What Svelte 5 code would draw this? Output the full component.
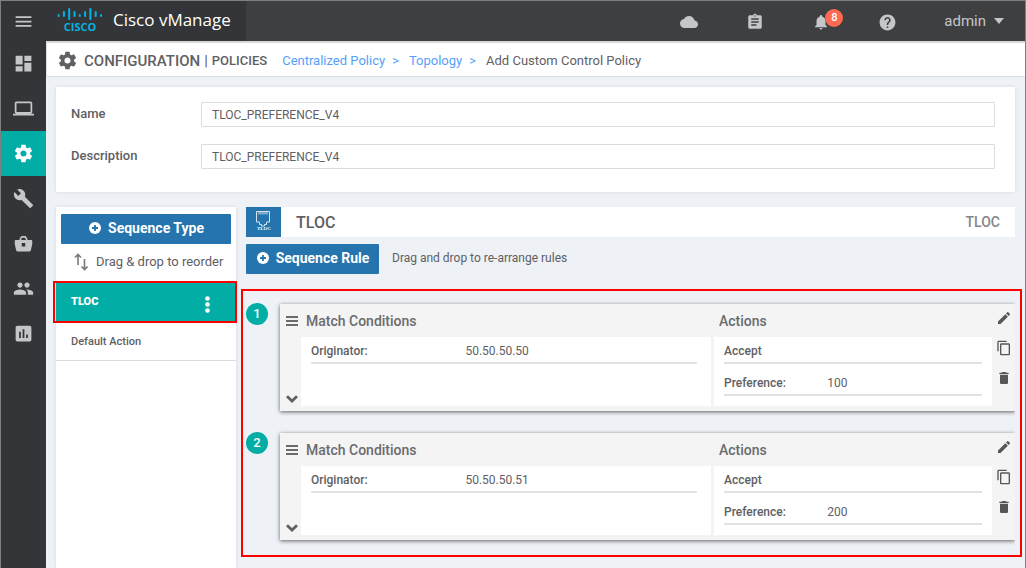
<script lang="ts">
  type Rule = { originator: string; preference: string }

  const icons = {
    menu: 'M3 18h18v-2H3v2zm0-5h18v-2H3v2zm0-7v2h18V6H3z',
    dashboard: 'M3 13h8V3H3v10zm0 8h8v-6H3v6zm10 0h8V11h-8v10zm0-18v6h8V3h-8z',
    laptop:
      'M20 18c1.1 0 1.99-.9 1.99-2L22 6c0-1.1-.9-2-2-2H4c-1.1 0-2 .9-2 2v10c0 1.1.9 2 2 2H0v2h24v-2h-4zM4 6h16v10H4V6z',
    settings:
      'M19.43 12.98c.04-.32.07-.64.07-.98s-.03-.66-.07-.98l2.11-1.65c.19-.15.24-.42.12-.64l-2-3.46c-.12-.22-.39-.3-.61-.22l-2.49 1c-.52-.4-1.08-.73-1.69-.98l-.38-2.65C14.46 2.18 14.25 2 14 2h-4c-.25 0-.46.18-.49.42l-.38 2.65c-.61.25-1.17.59-1.69.98l-2.49-1c-.23-.09-.49 0-.61.22l-2 3.46c-.13.22-.07.49.12.64l2.11 1.65c-.04.32-.07.65-.07.98s.03.66.07.98l-2.11 1.65c-.19.15-.24.42-.12.64l2 3.46c.12.22.39.3.61.22l2.49-1c.52.4 1.08.73 1.69.98l.38 2.65c.03.24.24.42.49.42h4c.25 0 .46-.18.49-.42l.38-2.65c.61-.25 1.17-.59 1.69-.98l2.49 1c.23.09.49 0 .61-.22l2-3.46c.12-.22.07-.49-.12-.64l-2.11-1.65zM12 15.5c-1.93 0-3.5-1.57-3.5-3.5s1.57-3.5 3.5-3.5 3.5 1.57 3.5 3.5-1.57 3.5-3.5 3.5z',
    build:
      'M22.7 19l-9.1-9.1c.9-2.3.4-5-1.5-6.9-2-2-5-2.4-7.4-1.3L9 6 6 9 1.6 4.7C.4 7.1.9 10.1 2.9 12.1c1.9 1.9 4.6 2.4 6.9 1.5l9.1 9.1c.4.4 1 .4 1.4 0l2.3-2.3c.5-.4.5-1.1.1-1.4z',
    bag: 'M7.500 8V6.500L9.500 3.500h5l2 3V8H20.500c1 0 1.500.6 1.500 1.500v3l-1.500 7c-.2 1-.8 1.500-1.700 1.500H5.200c-.9 0-1.500-.5-1.700-1.500L2 12.500v-3C2 8.600 2.500 8 3.500 8h4zm2 0h5V6.500l-1-1h-3l-1 1V8zM10 11.500v4h4v-4h-4z',
    people:
      'M16 11c1.66 0 2.99-1.34 2.99-3S17.66 5 16 5c-1.66 0-3 1.34-3 3s1.34 3 3 3zm-8 0c1.66 0 2.99-1.34 2.99-3S9.66 5 8 5C6.34 5 5 6.34 5 8s1.34 3 3 3zm0 2c-2.33 0-7 1.17-7 3.5V19h14v-2.5c0-2.33-4.67-3.5-7-3.5zm8 0c-.29 0-.62.02-.97.05 1.16.84 1.97 1.97 1.97 3.45V19h6v-2.5c0-2.33-4.67-3.5-7-3.5z',
    chart:
      'M19 3H5c-1.1 0-2 .9-2 2v14c0 1.1.9 2 2 2h14c1.1 0 2-.9 2-2V5c0-1.1-.9-2-2-2zM9 17H7v-7h2v7zm4 0h-2V7h2v10zm4 0h-2v-4h2v4z',
    cloud:
      'M19.35 10.04C18.67 6.59 15.64 4 12 4 9.11 4 6.6 5.64 5.35 8.04 2.34 8.36 0 10.91 0 14c0 3.31 2.69 6 6 6h13c2.76 0 5-2.24 5-5 0-2.64-2.05-4.78-4.65-4.96z',
    tasks:
      'M19 3h-4.18C14.4 1.84 13.3 1 12 1c-1.3 0-2.4.84-2.82 2H5c-1.1 0-2 .9-2 2v14c0 1.1.9 2 2 2h14c1.1 0 2-.9 2-2V5c0-1.1-.9-2-2-2zm-7 0c.55 0 1 .45 1 1s-.45 1-1 1-1-.45-1-1 .45-1 1-1zm2 14H7v-2h7v2zm3-4H7v-2h10v2zm0-4H7V7h10v2z',
    bell: 'M12 22c1.1 0 2-.9 2-2h-4c0 1.1.89 2 2 2zm6-6v-5c0-3.07-1.64-5.64-4.5-6.32V4c0-.83-.67-1.5-1.5-1.5s-1.5.67-1.5 1.5v.68C7.63 5.36 6 7.92 6 11v5l-2 2v1h16v-1l-2-2z',
    help: 'M12 2C6.48 2 2 6.48 2 12s4.48 10 10 10 10-4.48 10-10S17.52 2 12 2zm1 17h-2v-2h2v2zm2.07-7.75l-.9.92C13.45 12.9 13 13.5 13 15h-2v-.5c0-1.1.45-2.1 1.17-2.83l1.24-1.26c.37-.36.59-.86.59-1.41 0-1.1-.9-2-2-2s-2 .9-2 2H8c0-2.21 1.79-4 4-4s4 1.79 4 4c0 .88-.36 1.68-.93 2.25z',
    edit: 'M3 17.25V21h3.75L17.81 9.94l-3.75-3.75L3 17.25zM20.71 7.04c.39-.39.39-1.02 0-1.41l-2.34-2.34c-.39-.39-1.02-.39-1.41 0l-1.83 1.83 3.75 3.75 1.83-1.83z',
    copy: 'M16 1H4c-1.1 0-2 .9-2 2v14h2V3h12V1zm3 4H8c-1.1 0-2 .9-2 2v14c0 1.1.9 2 2 2h11c1.1 0 2-.9 2-2V7c0-1.1-.9-2-2-2zm0 16H8V7h11v14z',
    trash: 'M6 19c0 1.1.9 2 2 2h8c1.1 0 2-.9 2-2V7H6v12zM19 4h-3.5l-1-1h-5l-1 1H5v2h14V4z',
  }
  type IconName = keyof typeof icons

  const nav: { icon: IconName; label: string }[] = [
    { icon: 'dashboard', label: 'Dashboard' },
    { icon: 'laptop', label: 'Monitor' },
    { icon: 'settings', label: 'Configuration' },
    { icon: 'build', label: 'Tools' },
    { icon: 'bag', label: 'Maintenance' },
    { icon: 'people', label: 'Administration' },
    { icon: 'chart', label: 'Analytics' },
  ]

  let section = 'Configuration'
  let name = 'TLOC_PREFERENCE_V4'
  let description = 'TLOC_PREFERENCE_V4'
  let collapsed: boolean[] = [false, false]
  let rules: Rule[] = [
    { originator: '50.50.50.50', preference: '100' },
    { originator: '50.50.50.51', preference: '200' },
  ]

  // top and height of each bar in the logo
  const bars = [
    [6, 3],
    [3, 6],
    [0, 12],
    [3, 6],
    [6, 3],
    [3, 6],
    [0, 12],
    [3, 6],
    [6, 3],
  ]

  function addRule() {
    rules = [...rules, { originator: '', preference: '' }]
  }

  function copyRule(i: number) {
    rules = [...rules.slice(0, i + 1), { ...rules[i] }, ...rules.slice(i + 1)]
  }

  function removeRule(i: number) {
    rules = rules.filter((_, n) => n !== i)
  }
</script>

<div class="shell">
  <header>
    <div class="brand">
      <button class="burger" aria-label="Menu">
        <svg width="21" height="21" viewBox="0 0 24 24"><path d={icons.menu} /></svg>
      </button>
      <svg class="logo" width="46" height="30" viewBox="0 0 46 30">
        {#each bars as [top, height], i}
          <rect x={0.6 + i * 5.3} y={top + 2} width="2" {height} rx="1" />
        {/each}
        <text x="23" y="25" text-anchor="middle">CISCO</text>
      </svg>
      <span class="product">Cisco vManage</span>
    </div>
    <div class="tools">
      <button aria-label="Cloud">
        <svg width="18" height="18" viewBox="0 0 24 24"><path d={icons.cloud} /></svg>
      </button>
      <button aria-label="Tasks">
        <svg width="18" height="18" viewBox="0 0 24 24"><path d={icons.tasks} /></svg>
      </button>
      <button aria-label="Alarms">
        <svg width="18" height="18" viewBox="0 0 24 24"><path d={icons.bell} /></svg>
        <span class="count">8</span>
      </button>
      <button aria-label="Help">
        <svg width="19" height="19" viewBox="0 0 24 24"><path d={icons.help} /></svg>
      </button>
    </div>
    <button class="user">
      admin
      <svg width="10" height="6" viewBox="0 0 10 6"><path d="M0 0h10L5 6z" /></svg>
    </button>
  </header>

  <div class="body">
    <nav>
      {#each nav as item}
        <button
          class:active={section === item.label}
          aria-label={item.label}
          on:click={() => (section = item.label)}
        >
          <svg width="21" height="21" viewBox="0 0 24 24"><path d={icons[item.icon]} fill-rule="evenodd" /></svg>
        </button>
      {/each}
    </nav>

    <main>
      <div class="crumbs">
        <svg width="21" height="21" viewBox="0 0 24 24"><path d={icons.settings} /></svg>
        <h1>CONFIGURATION</h1>
        <span class="bar">|</span>
        <span class="sub">POLICIES</span>
        <a href="#centralized">Centralized Policy</a>
        <span class="sep">&gt;</span>
        <a href="#topology">Topology</a>
        <span class="sep">&gt;</span>
        <span class="here">Add Custom Control Policy</span>
      </div>

      <form class="panel">
        <label for="name">Name</label>
        <input id="name" type="text" bind:value={name} />
        <label for="description">Description</label>
        <input id="description" type="text" bind:value={description} />
      </form>

      <div class="columns">
        <aside class="panel">
          <button class="primary">
            <svg width="12" height="12" viewBox="0 0 12 12">
              <circle cx="6" cy="6" r="6" fill="#fff" />
              <path d="M6 3v6M3 6h6" stroke="#2574ae" stroke-width="1.8" />
            </svg>
            Sequence Type
          </button>
          <p class="reorder">
            <svg width="14" height="18" viewBox="0 0 14 18">
              <path d="M4 12V2M1 4.500 4 1.500l3 3M10.500 6v10M7.500 13.500l3 3 3-3" />
            </svg>
            Drag &amp; drop to reorder
          </p>
          <div class="sequence selected">
            <a href="#tloc">TLOC</a>
            <button aria-label="Sequence options">
              <svg width="5" height="17" viewBox="0 0 5 17">
                <circle cx="2.500" cy="2.500" r="2.300" />
                <circle cx="2.500" cy="8.500" r="2.300" />
                <circle cx="2.500" cy="14.500" r="2.300" />
              </svg>
            </button>
          </div>
          <div class="sequence">
            <a href="#default">Default Action</a>
          </div>
        </aside>

        <section>
          <div class="title">
            <div class="tile">
              <svg width="35" height="30" viewBox="0 0 35 30">
                <path
                  d="M10.500 4.500h13v10.500h-3v2.500h-2v1.500h-3v-1.500h-2V15h-3z M13 5v2.500M15 5v2.500M17 5v2.500M19 5v2.500M21 5v2.500"
                />
                <text x="18" y="23" text-anchor="middle">TLOC</text>
              </svg>
            </div>
            <h2>TLOC</h2>
            <span>TLOC</span>
          </div>

          <div class="toolbar">
            <button class="primary" on:click={addRule}>
              <svg width="12" height="12" viewBox="0 0 12 12">
                <circle cx="6" cy="6" r="6" fill="#fff" />
                <path d="M6 3v6M3 6h6" stroke="#2574ae" stroke-width="1.8" />
              </svg>
              Sequence Rule
            </button>
            <span>Drag and drop to re-arrange rules</span>
          </div>

          <ol class="rules">
            {#each rules as rule, i}
              <li>
                <span class="number">{i + 1}</span>
                <article>
                  <div class="gutter">
                    <svg width="12" height="10" viewBox="0 0 12 10">
                      <path d="M0 0h12v2H0zM0 4h12v2H0zM0 8h12v2H0z" fill="#6b6b6d" />
                    </svg>
                    <button aria-label="Collapse rule" on:click={() => (collapsed[i] = !collapsed[i])}>
                      <svg width="12" height="8" viewBox="0 0 12 8">
                        <path d="M1 1.200 6 6l5-4.800" fill="none" stroke="#606060" stroke-width="2.800" />
                      </svg>
                    </button>
                  </div>
                  <div class="match">
                    <h3>Match Conditions</h3>
                    <dl class:collapsed={collapsed[i]}>
                      <div><dt>Originator:</dt><dd>{rule.originator}</dd></div>
                    </dl>
                  </div>
                  <div class="actions">
                    <h3>Actions</h3>
                    <dl class:collapsed={collapsed[i]}>
                      <div><dt>Accept</dt><dd></dd></div>
                      <div><dt>Preference:</dt><dd>{rule.preference}</dd></div>
                    </dl>
                  </div>
                  <div class="edit">
                    <button aria-label="Edit rule">
                      <svg width="16" height="16" viewBox="0 0 24 24"><path d={icons.edit} /></svg>
                    </button>
                    <button aria-label="Copy rule" on:click={() => copyRule(i)}>
                      <svg width="16" height="16" viewBox="0 0 24 24"><path d={icons.copy} /></svg>
                    </button>
                    <button aria-label="Delete rule" on:click={() => removeRule(i)}>
                      <svg width="16" height="16" viewBox="0 0 24 24"><path d={icons.trash} /></svg>
                    </button>
                  </div>
                </article>
              </li>
            {/each}
          </ol>
        </section>
      </div>
    </main>
  </div>
</div>

<style>
  :global(body) {
    margin: 0;
  }

  .shell,
  .shell * {
    box-sizing: border-box;
  }

  .shell {
    display: flex;
    flex-flow: column;
    min-height: 100vh;
    border: 1px solid #808080;
    border-bottom: 0;
    background: #eef1f6;
    color: #5f6063;
    font-family: Roboto, sans-serif;
    font-size: 13px;
  }

  svg {
    display: block;
    flex: none;
    fill: currentColor;
  }

  h1,
  h2,
  h3,
  p,
  dl,
  dd,
  ol {
    margin: 0;
    padding: 0;
  }

  a {
    color: inherit;
    text-decoration: none;
  }

  button {
    display: flex;
    align-items: center;
    justify-content: center;
    padding: 0;
    border: 0;
    background: none;
    color: inherit;
    font: inherit;
    cursor: pointer;
  }

  /* top bar */
  header {
    display: flex;
    height: 40px;
    background: #3e3f41;
    color: #c5c6c9;
  }

  .brand {
    display: flex;
    align-items: center;
    width: 245px;
    background: #343538;
  }

  .burger {
    width: 44px;
    height: 40px;
  }

  .logo {
    margin-left: 12px;
    fill: #04b2e2;
    font: bold 11px 'Open Sans', sans-serif;
  }

  .product {
    margin-left: 10px;
    padding-bottom: 4px;
    color: #fff;
    font: 17px 'Open Sans', sans-serif;
  }

  .tools {
    display: flex;
    flex: 1;
    justify-content: flex-end;
    gap: 26px;
  }

  .tools button {
    position: relative;
    width: 40px;
    padding-top: 2px;
  }

  .count {
    position: absolute;
    top: 8px;
    left: 24px;
    width: 18px;
    border-radius: 50%;
    background: #fc6a52;
    color: #fff;
    font-size: 11px;
    font-weight: 500;
    line-height: 18px;
  }

  .user {
    gap: 8px;
    margin: 0 21px 0 37px;
    font-size: 15px;
  }

  .body {
    display: flex;
    flex: 1;
  }

  nav {
    width: 45px;
    background: #343538;
    color: #c5c6c9;
  }

  nav button {
    width: 45px;
    height: 45px;
  }

  nav .active {
    background: #02ada6;
    color: #fff;
  }

  main {
    display: flex;
    flex: 1;
    flex-flow: column;
    min-width: 0;
  }

  .crumbs {
    display: flex;
    align-items: center;
    height: 36px;
    padding: 2px 0 0 10px;
    border: 1px solid #dddee1;
    border-top: 2px solid #d9d9dc;
    border-right: 0;
    background: #fff;
    white-space: pre;
  }

  h1 {
    margin-left: 6px;
    font-size: 15px;
    font-weight: 500;
  }

  .bar {
    margin: 0 4px;
    font-size: 15px;
  }

  .sub {
    margin-right: 15px;
    font-weight: 500;
  }

  .crumbs a,
  .sep {
    color: #559ffb;
  }

  .sep {
    margin: 0 10px 0 7px;
  }

  .panel {
    background: #fff;
    box-shadow: 0 0 4px rgba(0, 0, 0, 0.1);
  }

  form {
    display: grid;
    grid-template-columns: 130px 1fr;
    row-gap: 17px;
    align-items: center;
    margin: 10px 10px 15px;
    padding: 15px 20px 23px 15px;
  }

  label {
    padding-bottom: 2px;
    font-weight: 500;
  }

  input {
    min-width: 0;
    height: 25px;
    padding: 0 10px;
    border: 1px solid #dcdcdc;
    border-radius: 1px;
    color: #5f6063;
    font: 12px Roboto, sans-serif;
  }

  .columns {
    display: grid;
    flex: 1;
    grid-template-columns: 180px 1fr;
    gap: 10px;
    padding: 0 10px;
  }

  .primary {
    gap: 7px;
    height: 30px;
    padding: 0 0 2px 1px;
    border-radius: 1px;
    background: #2574ae;
    color: #fff;
    font-size: 14px;
    font-weight: 700;
  }

  aside .primary {
    width: 170px;
    margin: 7px 5px 0;
  }

  .reorder {
    display: flex;
    align-items: center;
    gap: 8px;
    height: 38px;
    padding: 0 0 3px 18px;
  }

  .reorder path {
    fill: none;
    stroke: #77787a;
    stroke-width: 1.6;
  }

  .sequence {
    display: flex;
    align-items: center;
    justify-content: space-between;
    height: 39px;
    padding: 0 26px 0 15px;
    border-bottom: 1px solid #dcdcdc;
    font-size: 11px;
    font-weight: 500;
  }

  .selected {
    position: relative;
    height: 40px;
    border-bottom: 0;
    background: #02ada6;
    color: #fff;
    font-weight: 900;
  }

  .selected a {
    padding-bottom: 2px;
  }

  .selected button {
    padding-top: 4px;
  }

  .selected::after {
    content: '';
    position: absolute;
    inset: -1px -1px -1px -3px;
    border: 2px solid #f00;
    pointer-events: none;
  }

  section {
    min-width: 0;
  }

  .title {
    display: flex;
    align-items: center;
    height: 30px;
    padding-right: 15px;
    background: #fff;
  }

  .tile {
    background: #2574ae;
  }

  .tile path {
    fill: none;
    stroke: #d5e4f0;
  }

  .tile text {
    fill: #fff;
    font: bold 5px 'Liberation Serif', serif;
  }

  h2 {
    margin-left: 15px;
    font-size: 16px;
    font-weight: 500;
  }

  .title span {
    margin-left: auto;
    color: #85868a;
    font-size: 14px;
    font-weight: 500;
  }

  .toolbar {
    display: flex;
    align-items: center;
    gap: 13px;
    margin: 7px 0 15px;
    font-size: 12px;
  }

  .toolbar .primary {
    width: 133px;
  }

  .toolbar span {
    padding-bottom: 2px;
  }

  .rules {
    display: flex;
    flex-flow: column;
    gap: 21px;
    margin: 0 -7px 10px -5px;
    padding: 12px 5px 15px 3px;
    border: 2px solid #f00;
    list-style: none;
  }

  li {
    display: flex;
    align-items: flex-start;
    gap: 12px;
  }

  .number {
    width: 22px;
    border-radius: 50%;
    background: #02ada6;
    color: #fff;
    font-weight: 500;
    line-height: 22px;
    text-align: center;
  }

  article {
    display: grid;
    flex: 1;
    grid-template-columns: 21px 59fr 3px 40fr 23px;
    margin-top: 1px;
    padding-bottom: 5px;
    background: #f4f4f4;
    box-shadow: 0 1px 4px rgba(0, 0, 0, 0.6);
    clip-path: inset(-6px 0 -6px -6px);
  }

  .gutter {
    display: flex;
    flex-flow: column;
    justify-content: space-between;
    align-items: flex-start;
    padding: 12px 0 3px 6px;
  }

  .actions {
    grid-column: 4;
  }

  h3 {
    padding: 2px 0 0 5px;
    font-size: 14px;
    font-weight: 500;
    line-height: 31px;
    color: #6b6b6d;
  }

  dl {
    display: flex;
    flex-flow: column;
    gap: 5px;
    min-height: 69px;
    padding: 0 10px 10px;
    background: #fff;
    font-size: 12px;
  }

  .match dl {
    padding-right: 14px;
  }

  .collapsed {
    display: none;
  }

  dl div {
    display: flex;
    height: 27px;
    padding-top: 2px;
    border-bottom: 2px solid #e2e2e2;
    line-height: 25px;
  }

  dt {
    width: 40%;
    font-weight: 500;
  }

  .edit {
    display: flex;
    flex-flow: column;
    align-items: center;
    gap: 14px;
    padding-top: 6px;
    color: #565656;
  }
</style>
